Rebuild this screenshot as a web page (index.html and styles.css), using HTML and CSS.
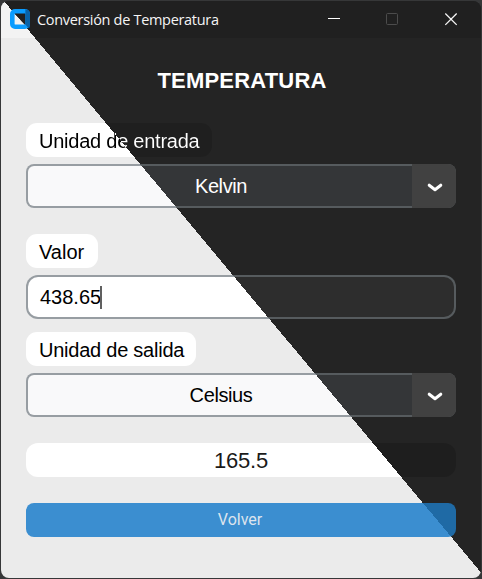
FILE: index.html
```html
<!DOCTYPE html>
<html lang="es">
<head>
<meta charset="utf-8">
<title>Conversión de Temperatura</title>
<link rel="stylesheet" href="styles.css">
</head>
<body>
<div class="window">
  <header class="titlebar">
    <svg class="app-icon" width="20" height="20" viewBox="0 0 20 20">
      <path d="M4 4 15 16H4z" fill="#f2f2f2"/>
      <path d="M4 4h12v12z" fill="#202020"/>
      <rect x="2.3" y="2.3" width="15.4" height="15.4" rx="2.7" fill="none" stroke="#0a9cff" stroke-width="4.6"/>
      <path d="M15.4 .2Q20 .6 20 5V15Q20 19 18.6 19.3L15.4 15.4z" fill="#0862a8"/>
    </svg>
    <span class="caption">Conversión de Temperatura</span>
    <svg class="controls" width="132" height="14" viewBox="0 0 132 14" fill="none">
      <path d="M1 5.5h12" stroke="#fff"/>
      <rect x="59.5" y="0.5" width="11" height="11" rx="1" stroke="#4c4c4c"/>
      <path d="M118.3 .5l11.4 11.4M129.7 .5L118.3 11.9" stroke="#f4f4f4" stroke-width="1.3"/>
    </svg>
  </header>
  <main class="content">
    <h1 class="heading">TEMPERATURA</h1>
    <div class="label label-input"><span class="split-text">Unidad de entrada</span></div>
    <div class="select">
      <span class="select-value on-dark">Kelvin</span>
      <span class="arrow"><svg width="16" height="12" viewBox="0 0 16 12"><path d="M2.2 5.2L8 9.7 13.8 5.2" fill="none" stroke="#fff" stroke-width="3" stroke-linecap="round" stroke-linejoin="round"/></svg></span>
    </div>
    <div class="label label-value"><span>Valor</span></div>
    <div class="entry"><span class="entry-text">438.65</span><i class="caret"></i></div>
    <div class="label label-output"><span>Unidad de salida</span></div>
    <div class="select">
      <span class="select-value">Celsius</span>
      <span class="arrow"><svg width="16" height="12" viewBox="0 0 16 12"><path d="M2.2 5.2L8 9.7 13.8 5.2" fill="none" stroke="#fff" stroke-width="3" stroke-linecap="round" stroke-linejoin="round"/></svg></span>
    </div>
    <div class="result"><span>165.5</span></div>
    <div class="button"><span>Volver</span></div>
  </main>
</div>
</body>
</html>
```
FILE: styles.css
```css
/* Every surface shares one viewport-fixed diagonal: light below, dark above. */
* { box-sizing: border-box; }
body {
  margin: 0;
  width: 482px;
  height: 579px;
  padding: 1px 1px 1px;
  overflow: hidden;
  background: #363738;
  font-family: "Liberation Sans", Arial, sans-serif;
  color: #000;
}
.window {
  width: 480px;
  height: 577px;
  border-radius: 8px;
  overflow: hidden;
  background: linear-gradient(50.16deg, #ebebeb calc(50% + 2.9px), #242424 0) fixed;
}
.titlebar {
  height: 37px;
  display: flex;
  align-items: center;
  padding: 0 22px 0 9px;
  background: linear-gradient(50.16deg, #f3f3f3 calc(50% + 2.9px), #202020 0) fixed;
}
.app-icon { flex: none; margin-top: -1px; }
.caption {
  margin-left: 7px;
  font: 14.5px/20px "Open Sans", "Noto Sans", sans-serif;
  letter-spacing: -0.31px;
  color: #f5f5f5;
  white-space: nowrap;
}
.controls { margin-left: auto; }
.content {
  display: flex;
  flex-direction: column;
  align-items: flex-start;
  padding: 29px 25px 0;
}
.heading {
  margin: 0;
  align-self: center;
  font-size: 22px;
  line-height: 28px;
  font-weight: 700;
  letter-spacing: 0.2px;
  padding-left: 2px;
  color: #fff;
}
.label {
  height: 34px;
  padding-left: 13px;
  border-radius: 11px;
  font-size: 20px;
  line-height: 36px;
  letter-spacing: -0.24px;
  white-space: nowrap;
  background: linear-gradient(50.16deg, #fff calc(50% + 2.9px), #1f1f1f 0) fixed;
}
.label-input { width: 186px; margin-top: 28px; }
.label-value { width: 72px; margin-top: 26px; letter-spacing: 0; }
.label-output { width: 170px; margin-top: 13px; }
.split-text {
  color: transparent;
  background: linear-gradient(50.16deg, #000 calc(50% + 2.9px), #fff 0) fixed;
  -webkit-background-clip: text;
  background-clip: text;
}
.select, .entry {
  width: 430px;
  height: 44px;
  display: flex;
  align-items: center;
  margin-top: 7px;
  border: 2px solid transparent;
  font-size: 20px;
}
.select {
  border-radius: 8px;
  background:
    linear-gradient(50.16deg, #f9f9fa calc(50% + 2.9px), #343638 0) fixed padding-box,
    linear-gradient(50.16deg, #979da2 calc(50% + 2.9px), #565b5e 0) fixed border-box;
}
.select-value { flex: 1; text-align: center; letter-spacing: -0.4px; }
.on-dark { color: #fff; }
.arrow {
  width: 44px;
  height: 44px;
  margin: -2px;
  padding-left: 1px;
  display: flex;
  align-items: center;
  justify-content: center;
  border-radius: 0 8px 8px 0;
  background: #414141;
}
.entry {
  padding-left: 12px;
  border-radius: 12px;
  background:
    linear-gradient(50.16deg, #fff calc(50% + 2.9px), #2d2d2d 0) fixed padding-box,
    linear-gradient(50.16deg, #979da2 calc(50% + 2.9px), #565b5e 0) fixed border-box;
}
.caret { width: 2px; height: 23px; margin-left: -1px; background: #606060; }
.result {
  width: 430px;
  height: 34px;
  margin-top: 26px;
  border-radius: 12px;
  text-align: center;
  font-size: 22px;
  line-height: 36px;
  letter-spacing: -0.2px;
  color: #1a1a1a;
  background: linear-gradient(50.16deg, #fff calc(50% + 2.9px), #1e1e1e 0) fixed;
}
.button {
  width: 430px;
  height: 34px;
  margin-top: 26px;
  padding-right: 2px;
  border-radius: 8px;
  text-align: center;
  font: 16px/34px Roboto, sans-serif;
  color: #dce4ee;
  background: linear-gradient(50.16deg, #3b8ed0 calc(50% + 2.9px), #1f6aa5 0) fixed;
}
```
